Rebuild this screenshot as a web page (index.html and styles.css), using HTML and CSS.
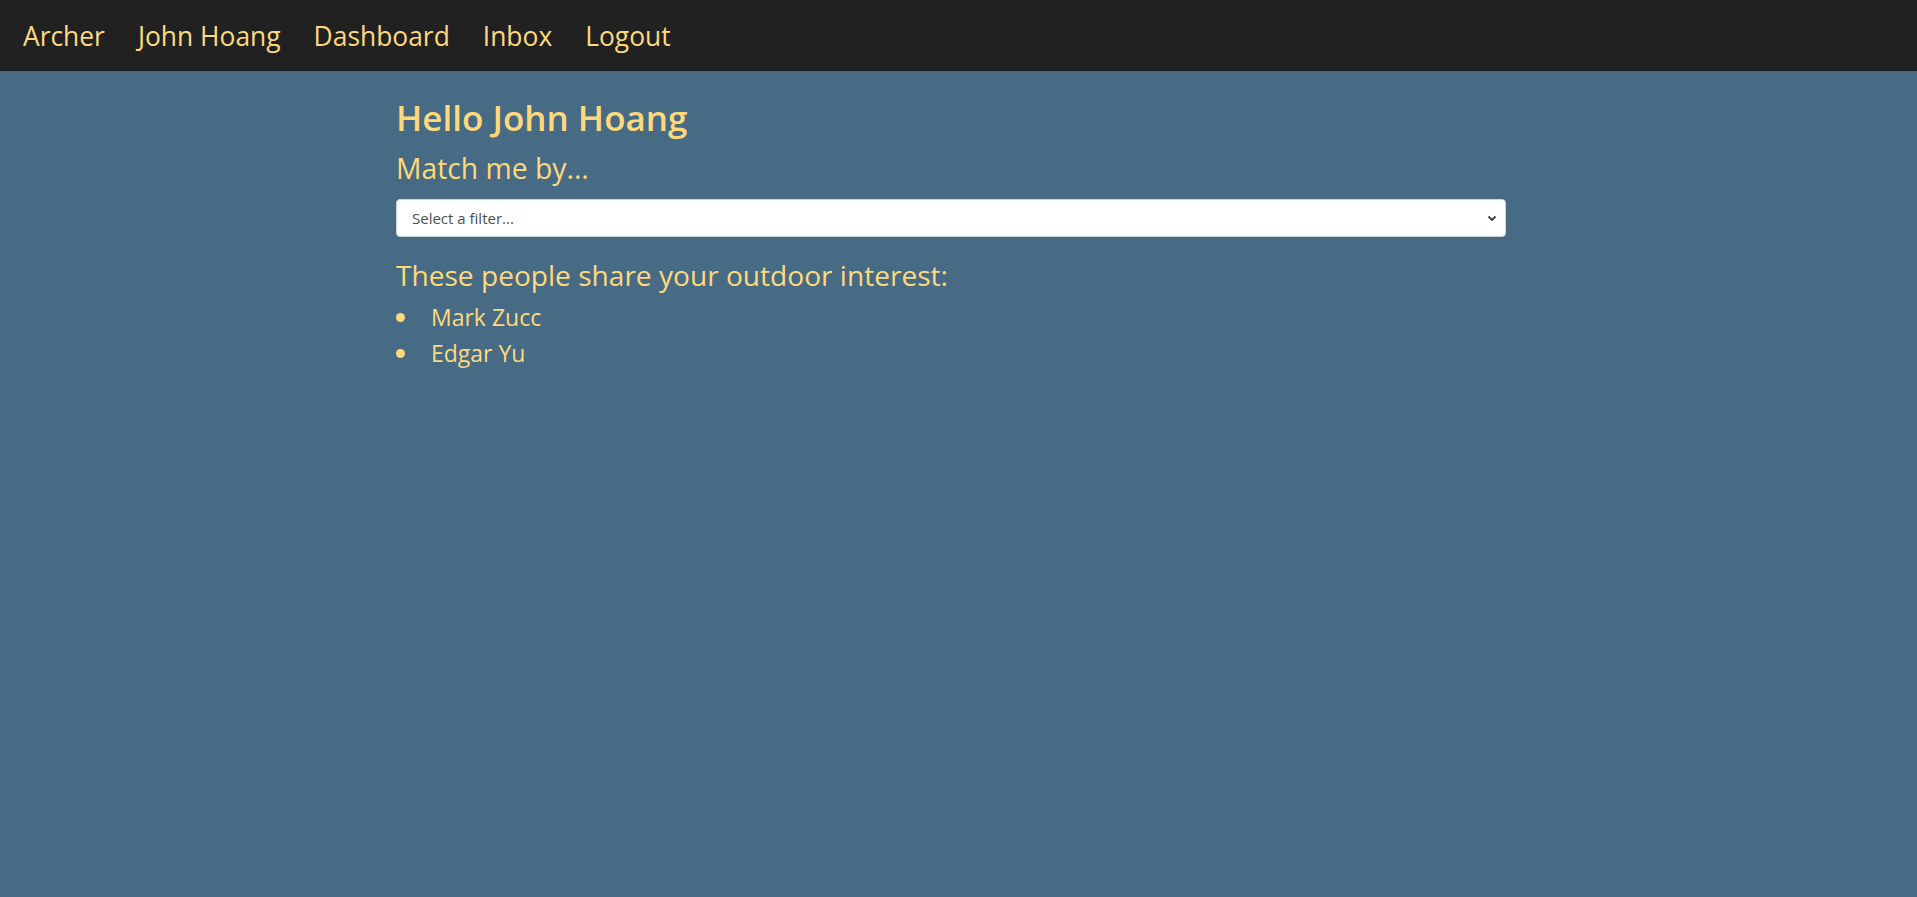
FILE: index.html
```html
<!DOCTYPE html>
<html lang="en">
<head>
<meta charset="utf-8">
<title>Archer</title>
<link rel="stylesheet" href="styles.css">
</head>
<body>
<nav class="navbar">
  <a class="nav-link" href="#">Archer</a>
  <a class="nav-link" href="#">John Hoang</a>
  <a class="nav-link" href="#">Dashboard</a>
  <a class="nav-link" href="#">Inbox</a>
  <a class="nav-link" href="#">Logout</a>
</nav>
<main class="content">
  <h1 class="greeting">Hello John Hoang</h1>
  <h2 class="subtitle">Match me by...</h2>
  <div class="select-wrap">
    <select class="filter">
      <option>Select a filter...</option>
      <option>Outdoor interest</option>
    </select>
    <svg class="chev" width="10" height="8" viewBox="0 0 10 8"><path d="M1.5 2.5 L5 6 L8.5 2.5" fill="none" stroke="#343a40" stroke-width="1.8"/></svg>
  </div>
  <h2 class="subtitle results-title">These people share your outdoor interest:</h2>
  <ul class="people">
    <li>Mark Zucc</li>
    <li>Edgar Yu</li>
  </ul>
</main>
</body>
</html>
```

FILE: styles.css
```css
html, body {
  margin: 0;
  padding: 0;
}
body {
  background: #476b85;
  font-family: "Open Sans", "Noto Sans", sans-serif;
  color: #fed97c;
  min-height: 897px;
}
.navbar {
  height: 71px;
  background: #212121;
  display: flex;
  align-items: center;
  padding-left: 23px;
  gap: 33px;
  box-sizing: border-box;
}
.nav-link {
  color: #fed97c;
  text-decoration: none;
  font-size: 26.4px;
  line-height: 30px;
}
.content {
  margin-left: 396px;
  width: 1110px;
  padding-top: 26px;
}
.greeting {
  margin: 0;
  font-size: 35px;
  font-weight: 600;
  line-height: 42px;
}
.subtitle {
  margin: 12px 0 0;
  font-size: 28.3px;
  font-weight: 400;
  line-height: 34px;
}
.select-wrap {
  position: relative;
  margin-top: 14px;
}
.filter {
  display: block;
  width: 100%;
  height: 38px;
  box-sizing: border-box;
  border: 1px solid #ced4da;
  border-radius: 4px;
  background: #fff;
  color: #495057;
  font-family: "Open Sans", sans-serif;
  font-size: 15px;
  padding: 0 15px;
  appearance: none;
  -webkit-appearance: none;
}
.chev {
  position: absolute;
  right: 9px;
  top: 15px;
  pointer-events: none;
}
.results-title {
  margin-top: 21px;
  font-size: 28.1px;
}
.people {
  list-style: none;
  margin: 7px 0 0;
  padding: 0;
}
.people li {
  display: flex;
  align-items: center;
  gap: 26px;
  font-size: 23px;
  line-height: 36px;
}
.people li::before {
  content: "";
  width: 9px;
  height: 9px;
  border-radius: 50%;
  background: #fed97c;
  flex: none;
}
```
